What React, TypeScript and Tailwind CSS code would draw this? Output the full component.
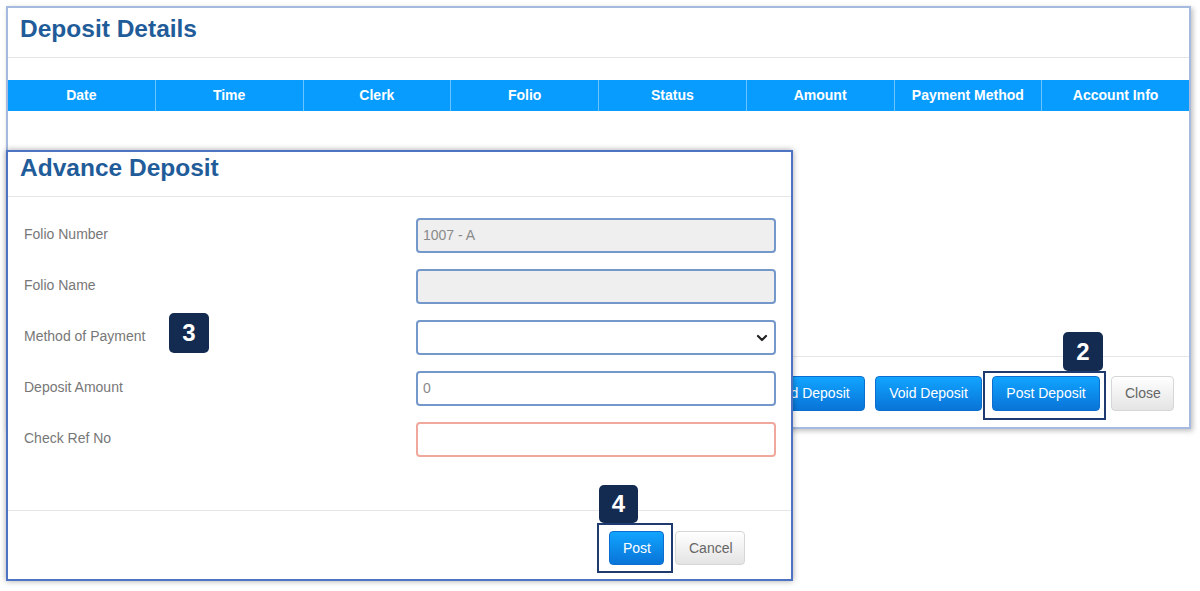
import React from "react";

const columns = ["Date", "Time", "Clerk", "Folio", "Status", "Amount", "Payment Method", "Account Info"];

const fields = [
  { label: "Folio Number", kind: "readonly", value: "1007 - A" },
  { label: "Folio Name", kind: "readonly", value: "" },
  { label: "Method of Payment", kind: "select", value: "" },
  { label: "Deposit Amount", kind: "input", value: "0" },
  { label: "Check Ref No", kind: "error", value: "" },
];

function StepBadge({ n, className }: { n: number; className: string }) {
  return (
    <div
      className={`absolute flex items-center justify-center rounded-[5px] bg-[#132b50] text-[24px] font-bold leading-none text-white ${className}`}
    >
      {n}
    </div>
  );
}

function BlueButton({ children, className = "" }: { children: React.ReactNode; className?: string }) {
  return (
    <button
      className={`rounded-[4px] border border-[#0a6fcf] bg-linear-to-b from-[#12a4ff] to-[#0a74d8] px-[13px] text-[14px] text-white ${className}`}
    >
      {children}
    </button>
  );
}

function GrayButton({ children, className = "" }: { children: React.ReactNode; className?: string }) {
  return (
    <button
      className={`rounded-[4px] border border-[#d6d6d6] bg-linear-to-b from-white to-[#e4e4e4] px-[13px] text-[14px] text-[#666] ${className}`}
    >
      {children}
    </button>
  );
}

function FieldBox({ kind, value }: { kind: string; value: string }) {
  if (kind === "select") {
    return (
      <div className="flex h-[35px] items-center justify-end rounded-[4px] border-2 border-[#7398c9] bg-white pr-[6px]">
        <svg width="12" height="12" viewBox="0 0 12 12">
          <path d="M2 4 L6 8 L10 4" fill="none" stroke="#222" strokeWidth="2.2" strokeLinecap="round" strokeLinejoin="round" />
        </svg>
      </div>
    );
  }
  const style =
    kind === "readonly"
      ? "border-[#7398c9] bg-[#efefef]"
      : kind === "error"
        ? "border-[#f0a79c] bg-white"
        : "border-[#7398c9] bg-white";
  return (
    <div className={`flex h-[35px] items-center rounded-[4px] border-2 px-[5px] text-[14px] text-[#8a8a8a] ${style}`}>
      {value}
    </div>
  );
}

export default function App() {
  return (
    <div className="relative h-[591px] w-[1200px] overflow-hidden bg-white font-['Liberation_Sans',Arial,sans-serif]">
      {/* Deposit Details window */}
      <div className="absolute left-[6px] top-[6px] flex h-[423px] w-[1185px] flex-col border-2 border-[#a6badf] bg-white shadow-[2px_2px_5px_rgba(0,0,0,0.25)]">
        <div className="h-[50px] border-b border-[#e6e6e6] pl-[12px] pt-[6px]">
          <h1 className="text-[24.5px] font-bold leading-[30px] text-[#1f5c99]">Deposit Details</h1>
        </div>
        <div className="mt-[22px] flex h-[31px] bg-[#089cff]">
          {columns.map((c, i) => (
            <div
              key={c}
              className={`flex flex-1 items-center justify-center text-[14px] font-bold text-white ${i > 0 ? "border-l border-[#6cc4ff]" : ""}`}
            >
              {c}
            </div>
          ))}
        </div>
        <div className="flex-1" />
        <div className="flex h-[71px] items-center justify-end gap-[10px] border-t border-[#e6e6e6] pr-[15px] pt-[3px]">
          <BlueButton className="h-[35px] w-[107px]">Add Deposit</BlueButton>
          <BlueButton className="h-[35px] w-[107px]">Void Deposit</BlueButton>
          <BlueButton className="h-[35px] w-[108px]">Post Deposit</BlueButton>
          <GrayButton className="ml-px h-[35px] w-[63px]">Close</GrayButton>
        </div>
      </div>

      <div className="absolute left-[983px] top-[371px] h-[49px] w-[123px] border-2 border-[#1f3a6e]" />
      <StepBadge n={2} className="left-[1063px] top-[332px] h-[39px] w-[40px]" />

      {/* Advance Deposit window */}
      <div className="absolute left-[6px] top-[150px] flex h-[431px] w-[787px] flex-col border-2 border-[#4d73c2] bg-white shadow-[0_0_6px_rgba(0,0,0,0.35)]">
        <div className="h-[45px] border-b border-[#e6e6e6] pl-[12px] pt-[1px]">
          <h2 className="text-[24.5px] font-bold leading-[30px] text-[#1f5c99]">Advance Deposit</h2>
        </div>
        <div className="flex h-[313px] flex-col gap-[16px] pl-[16px] pr-[15px] pt-[21px]">
          {fields.map((f) => (
            <div key={f.label} className="grid grid-cols-[392px_1fr] items-center">
              <span className="-mt-[2px] text-[14px] text-[#777]">{f.label}</span>
              <FieldBox kind={f.kind} value={f.value} />
            </div>
          ))}
        </div>
        <div className="flex flex-1 items-start justify-end gap-[11px] border-t border-[#e6e6e6] pr-[46px] pt-[20px]">
          <BlueButton className="h-[34px] w-[55px] px-0">Post</BlueButton>
          <GrayButton className="h-[34px] w-[70px] px-0">Cancel</GrayButton>
        </div>
      </div>

      <StepBadge n={3} className="left-[169px] top-[313px] h-[40px] w-[40px]" />
      <div className="absolute left-[597px] top-[523px] h-[50px] w-[76px] border-2 border-[#1f3a6e]" />
      <StepBadge n={4} className="left-[599px] top-[485px] h-[38px] w-[39px]" />
    </div>
  );
}
